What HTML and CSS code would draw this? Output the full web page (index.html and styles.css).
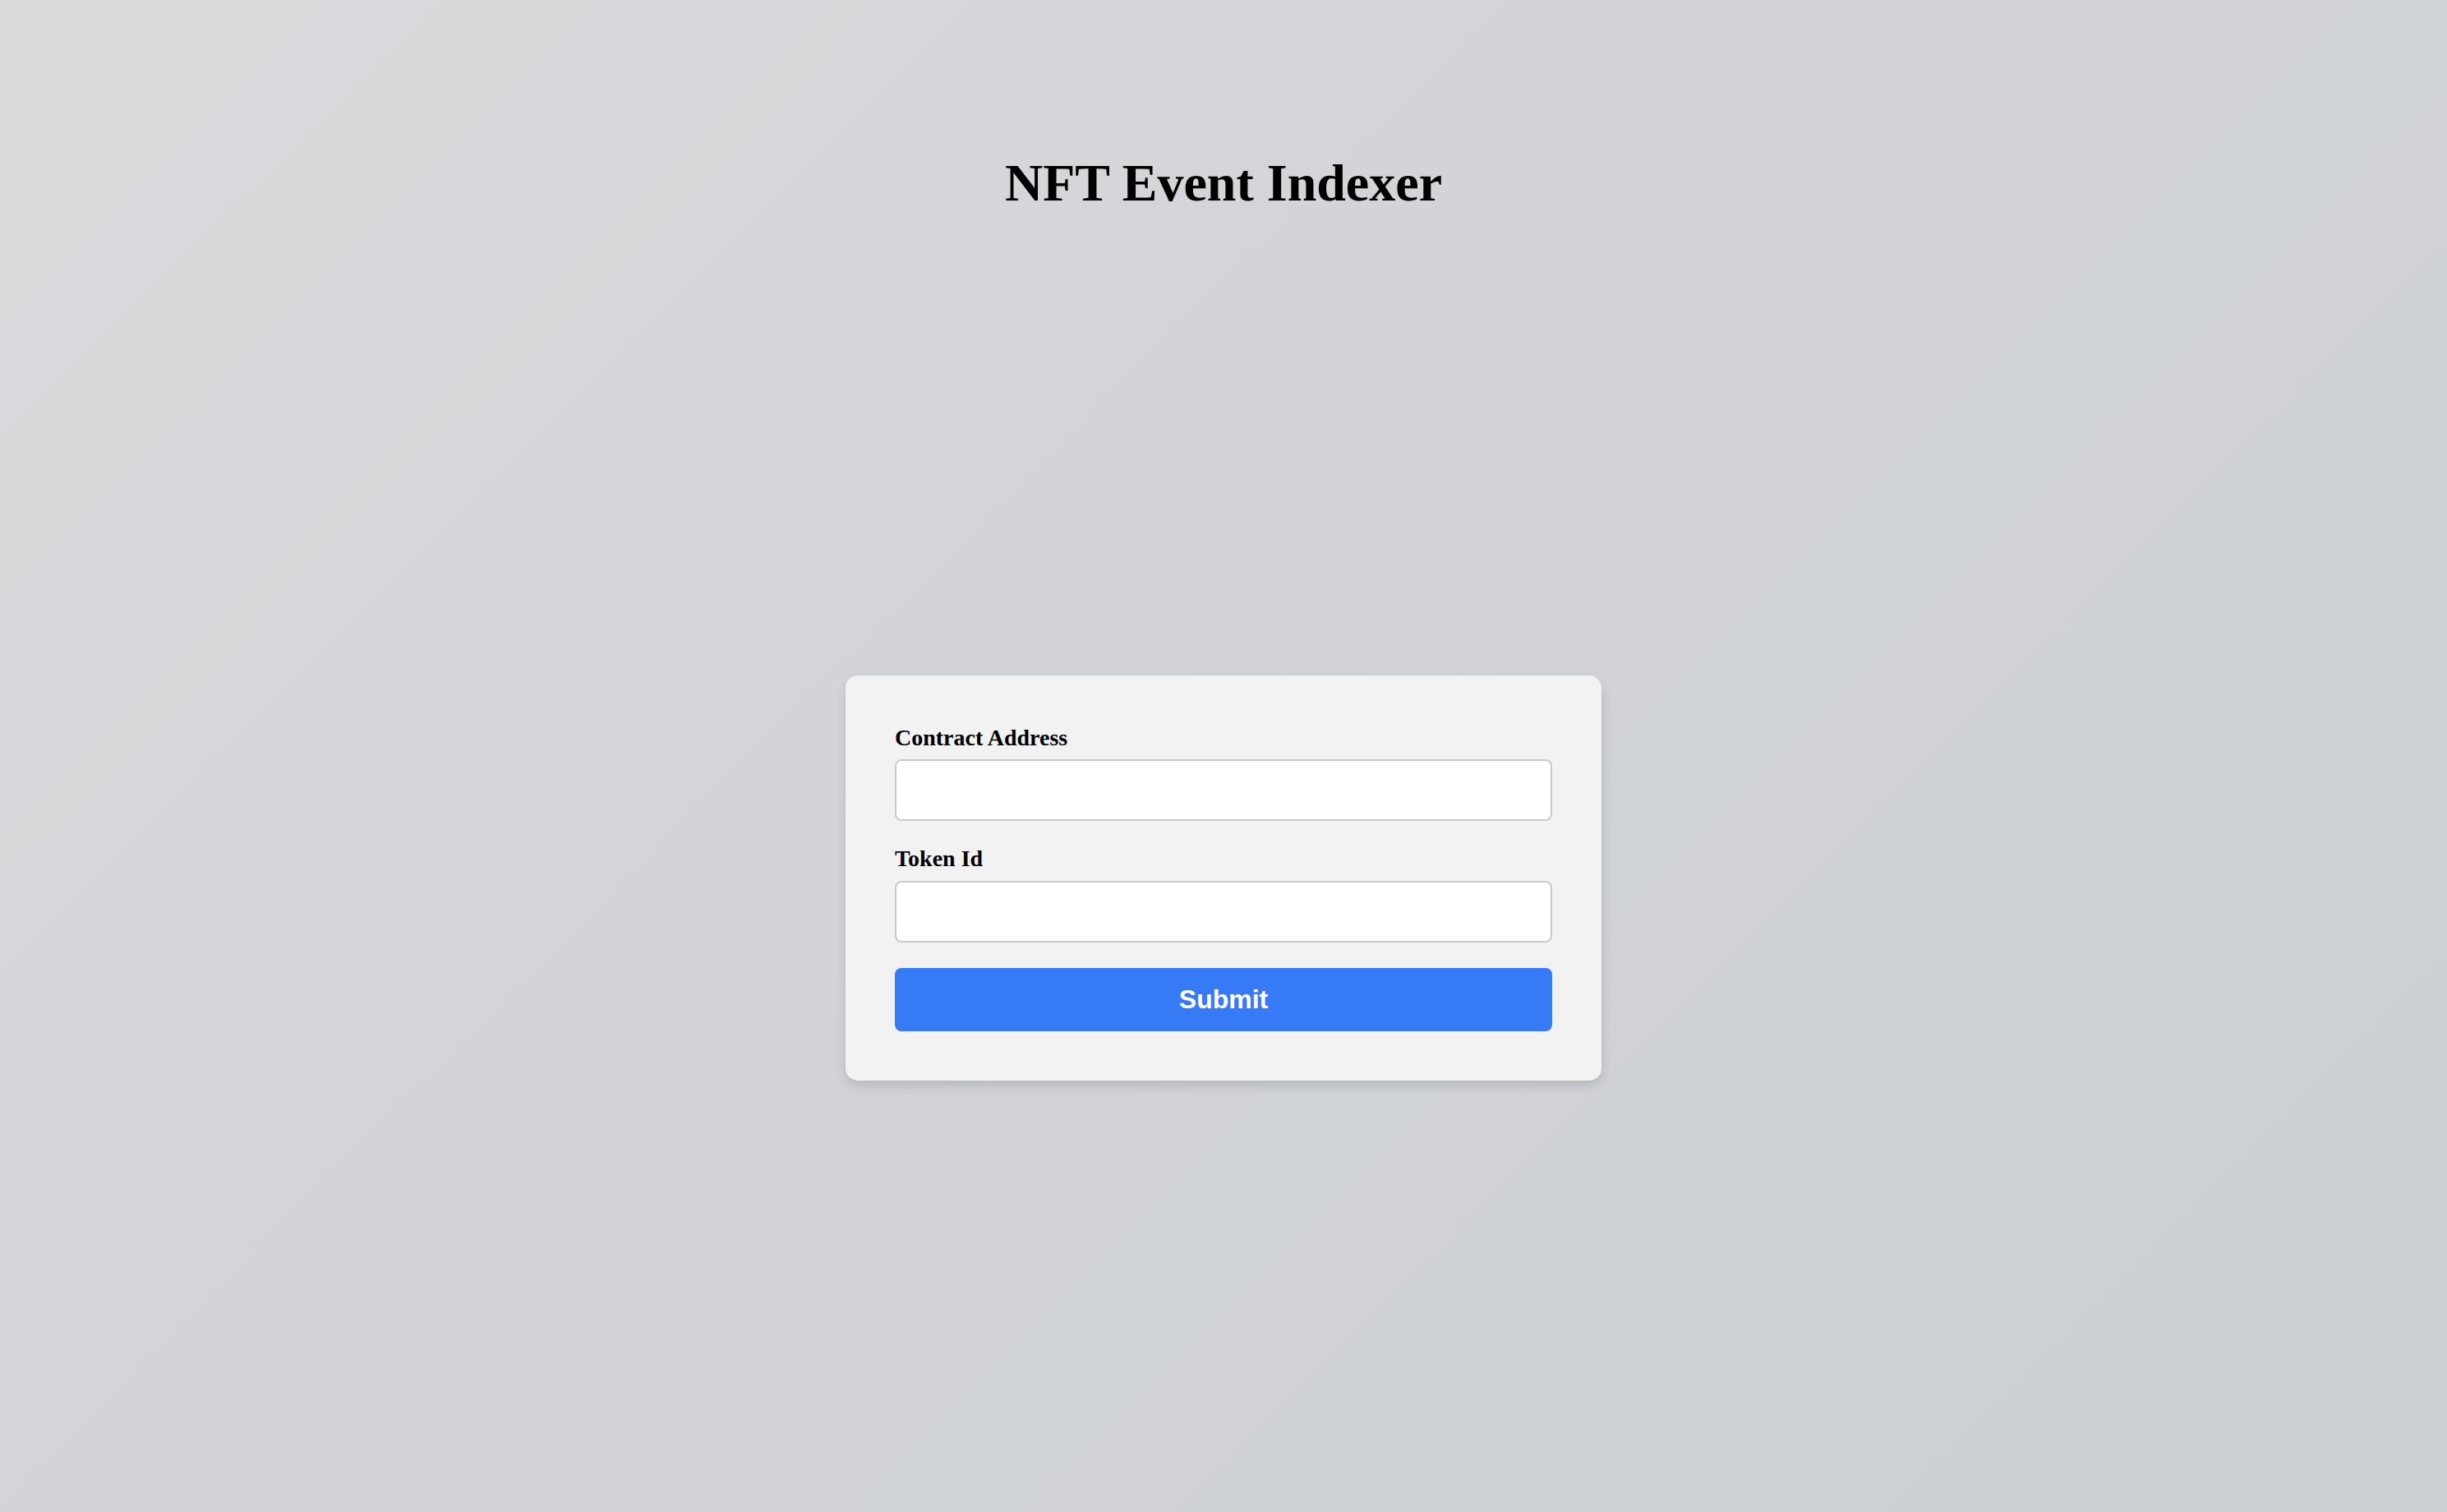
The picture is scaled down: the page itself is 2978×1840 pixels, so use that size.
FILE: index.html
```html
<!DOCTYPE html>
<html lang="en">
<head>
<meta charset="utf-8">
<title>NFT Event Indexer</title>
<link rel="stylesheet" href="styles.css">
</head>
<body>
<div class="page">
  <h1 class="title">NFT Event Indexer</h1>
  <main class="main">
    <form class="card">
      <label class="label" for="contract">Contract Address</label>
      <input class="input" id="contract" type="text">
      <label class="label label-second" for="token">Token Id</label>
      <input class="input" id="token" type="text">
      <button class="submit" type="button">Submit</button>
    </form>
  </main>
</div>
</body>
</html>
```

FILE: styles.css
```css
html, body {
  margin: 0;
  padding: 0;
}
body {
  font-family: "Liberation Serif", "Times New Roman", serif;
  background: linear-gradient(135deg, #d9dadc 0%, #d1d3d7 50%, #cbcfd4 100%);
  min-height: 100vh;
}
.page {
  min-height: 100vh;
  box-sizing: border-box;
  padding-top: 186px;
  display: flex;
  flex-direction: column;
}
.title {
  margin: 0 0 37px;
  font-size: 64px;
  line-height: 74px;
  font-weight: bold;
  text-align: center;
  color: #000;
}
.main {
  flex: 1;
  display: flex;
  align-items: center;
  justify-content: center;
}
.card {
  width: 920px;
  box-sizing: border-box;
  padding: 60px;
  background: #f2f2f2;
  border-radius: 15px;
  box-shadow: 0 6px 14px rgba(0, 0, 0, 0.13);
  display: flex;
  flex-direction: column;
}
.label {
  display: block;
  font-size: 28px;
  line-height: 32px;
  font-weight: bold;
  color: #000;
  margin-bottom: 10px;
}
.label-second {
  margin-top: 30px;
  margin-bottom: 11px;
}
.input {
  box-sizing: border-box;
  width: 100%;
  height: 75px;
  margin: 0;
  border: 2px solid #c9c9c9;
  border-radius: 8px;
  background: #fff;
  font-size: 28px;
  padding: 0 16px;
}
.submit {
  margin-top: 31px;
  height: 77px;
  width: 100%;
  border: none;
  border-radius: 8px;
  background: #377af5;
  color: #fff;
  font-family: "Liberation Sans", Arial, sans-serif;
  font-weight: bold;
  font-size: 32px;
  cursor: pointer;
}
```
